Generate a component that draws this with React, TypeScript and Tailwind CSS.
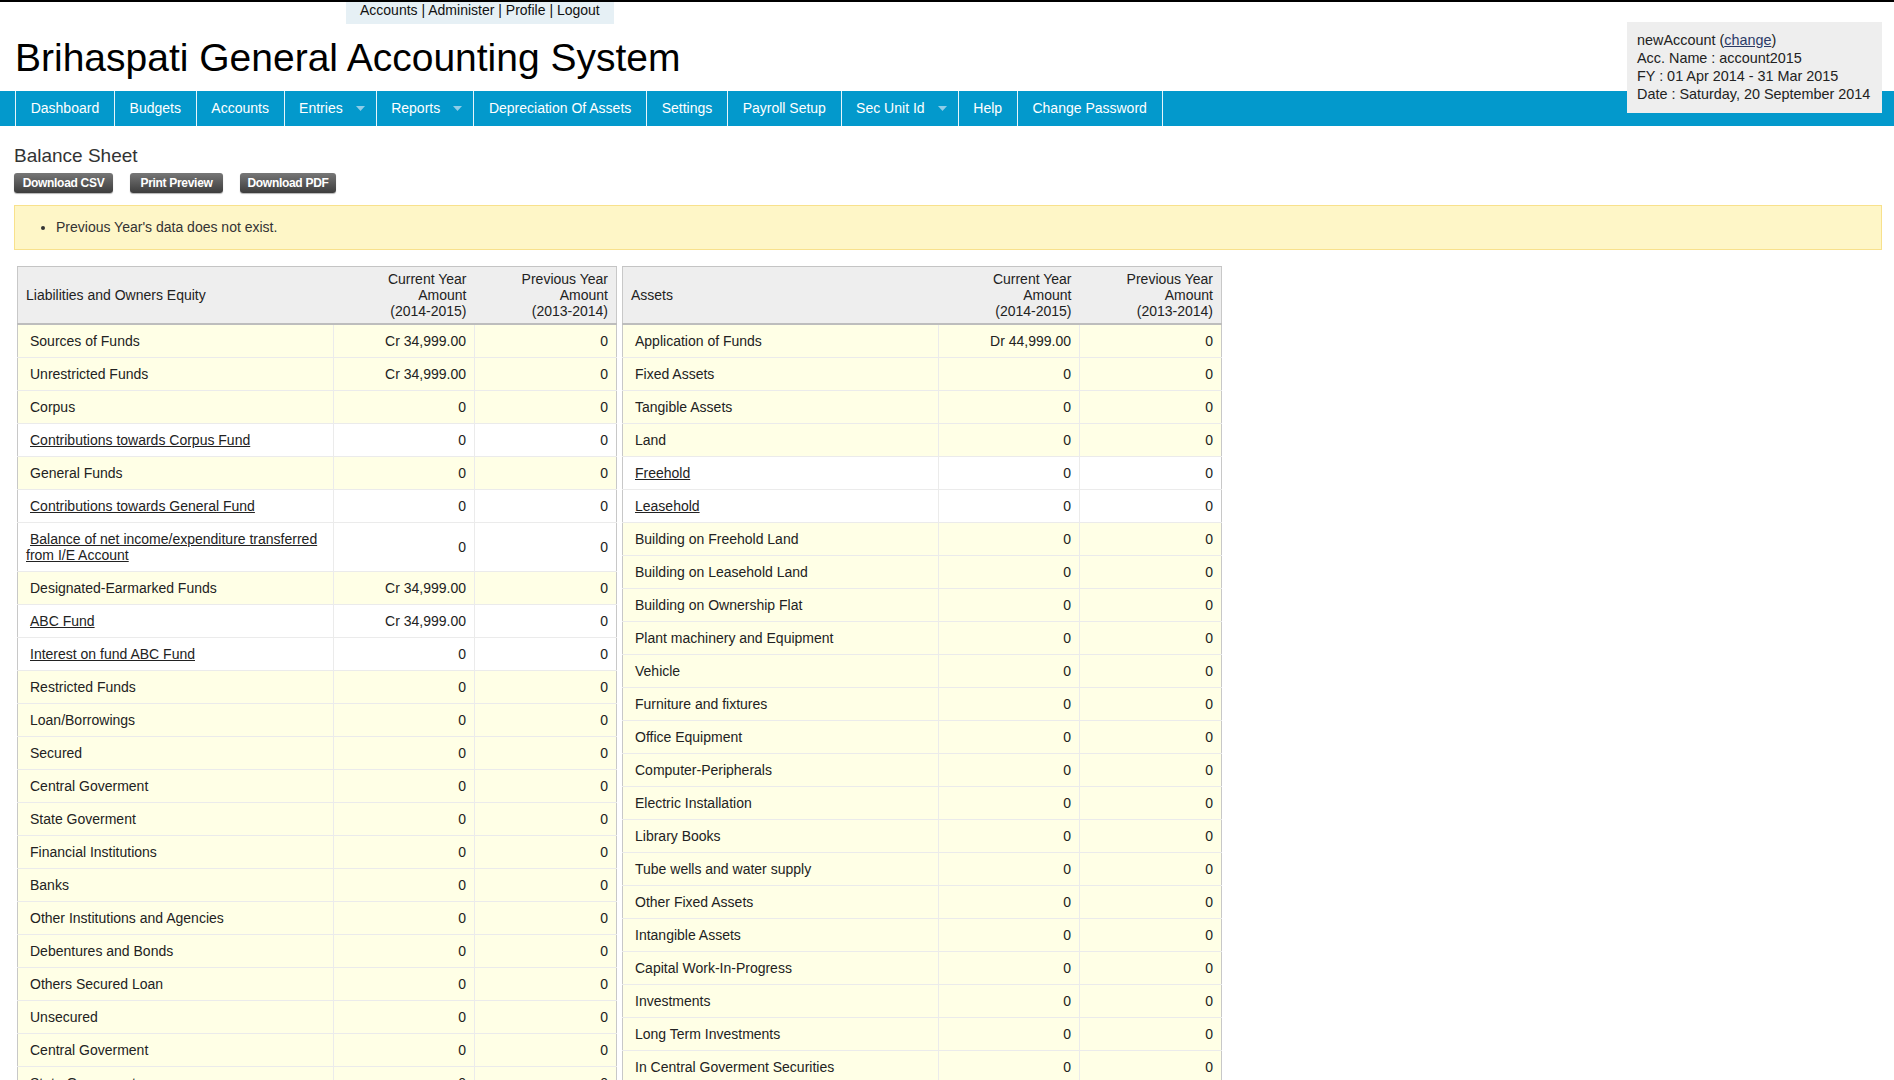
import React from "react";

type Row = { l: string; c: string; p: string; link?: boolean };

const leftRows: Row[] = [
  { l: "Sources of Funds", c: "Cr 34,999.00", p: "0" },
  { l: "Unrestricted Funds", c: "Cr 34,999.00", p: "0" },
  { l: "Corpus", c: "0", p: "0" },
  { l: "Contributions towards Corpus Fund", c: "0", p: "0", link: true },
  { l: "General Funds", c: "0", p: "0" },
  { l: "Contributions towards General Fund", c: "0", p: "0", link: true },
  { l: "Balance of net income/expenditure transferred from I/E Account", c: "0", p: "0", link: true },
  { l: "Designated-Earmarked Funds", c: "Cr 34,999.00", p: "0" },
  { l: "ABC Fund", c: "Cr 34,999.00", p: "0", link: true },
  { l: "Interest on fund ABC Fund", c: "0", p: "0", link: true },
  { l: "Restricted Funds", c: "0", p: "0" },
  { l: "Loan/Borrowings", c: "0", p: "0" },
  { l: "Secured", c: "0", p: "0" },
  { l: "Central Goverment", c: "0", p: "0" },
  { l: "State Goverment", c: "0", p: "0" },
  { l: "Financial Institutions", c: "0", p: "0" },
  { l: "Banks", c: "0", p: "0" },
  { l: "Other Institutions and Agencies", c: "0", p: "0" },
  { l: "Debentures and Bonds", c: "0", p: "0" },
  { l: "Others Secured Loan", c: "0", p: "0" },
  { l: "Unsecured", c: "0", p: "0" },
  { l: "Central Goverment", c: "0", p: "0" },
  { l: "State Goverment", c: "0", p: "0" },
  { l: "Financial Institutions", c: "0", p: "0" },
  { l: "Banks", c: "0", p: "0" },
];

const rightRows: Row[] = [
  { l: "Application of Funds", c: "Dr 44,999.00", p: "0" },
  { l: "Fixed Assets", c: "0", p: "0" },
  { l: "Tangible Assets", c: "0", p: "0" },
  { l: "Land", c: "0", p: "0" },
  { l: "Freehold", c: "0", p: "0", link: true },
  { l: "Leasehold", c: "0", p: "0", link: true },
  { l: "Building on Freehold Land", c: "0", p: "0" },
  { l: "Building on Leasehold Land", c: "0", p: "0" },
  { l: "Building on Ownership Flat", c: "0", p: "0" },
  { l: "Plant machinery and Equipment", c: "0", p: "0" },
  { l: "Vehicle", c: "0", p: "0" },
  { l: "Furniture and fixtures", c: "0", p: "0" },
  { l: "Office Equipment", c: "0", p: "0" },
  { l: "Computer-Peripherals", c: "0", p: "0" },
  { l: "Electric Installation", c: "0", p: "0" },
  { l: "Library Books", c: "0", p: "0" },
  { l: "Tube wells and water supply", c: "0", p: "0" },
  { l: "Other Fixed Assets", c: "0", p: "0" },
  { l: "Intangible Assets", c: "0", p: "0" },
  { l: "Capital Work-In-Progress", c: "0", p: "0" },
  { l: "Investments", c: "0", p: "0" },
  { l: "Long Term Investments", c: "0", p: "0" },
  { l: "In Central Goverment Securities", c: "0", p: "0" },
  { l: "In State Goverment Securities", c: "0", p: "0" },
];

const navItems: { t: string; dd?: boolean }[] = [
  { t: "Dashboard" },
  { t: "Budgets" },
  { t: "Accounts" },
  { t: "Entries", dd: true },
  { t: "Reports", dd: true },
  { t: "Depreciation Of Assets" },
  { t: "Settings" },
  { t: "Payroll Setup" },
  { t: "Sec Unit Id", dd: true },
  { t: "Help" },
  { t: "Change Password" },
];

const buttons: { t: string; w: string }[] = [
  { t: "Download CSV", w: "w-[99px]" },
  { t: "Print Preview", w: "w-[93px]" },
  { t: "Download PDF", w: "w-[96px]" },
];

function Sheet({ title, rows }: { title: string; rows: Row[] }) {
  return (
    <table className="w-[599px] table-fixed border-collapse border-x border-[#c8c8c8] text-[14px] text-[#222]">
      <colgroup>
        <col className="w-[316px]" />
        <col className="w-[141px]" />
        <col className="w-[142px]" />
      </colgroup>
      <thead>
        <tr className="bg-[#eeeeee] border-t border-t-[#c4c4c4] border-b-2 border-b-[#bdbdbd]">
          <th className="text-left font-normal pl-[8px] py-[4px] leading-[16px] align-middle">{title}</th>
          <th className="text-right font-normal pr-[8px] py-[4px] leading-[16px] align-middle">
            Current Year
            <br />
            Amount
            <br />
            (2014-2015)
          </th>
          <th className="text-right font-normal pr-[8px] py-[4px] leading-[16px] align-middle">
            Previous Year
            <br />
            Amount
            <br />
            (2013-2014)
          </th>
        </tr>
      </thead>
      <tbody>
        {rows.map((r, i) => (
          <tr key={i} className={`border-b border-b-[#ebebeb] ${r.link ? "bg-white" : "bg-[#ffffe6]"}`}>
            <td className="pl-[8px] pr-[6px] py-[8px] leading-[16px] indent-[4px] border-r border-r-[#ebebeb] align-middle">
              {r.link ? <a className="underline text-[#222] cursor-pointer">{r.l}</a> : r.l}
            </td>
            <td className="text-right pr-[8px] py-[8px] leading-[16px] border-r border-r-[#ebebeb] align-middle">{r.c}</td>
            <td className="text-right pr-[8px] py-[8px] leading-[16px] align-middle">{r.p}</td>
          </tr>
        ))}
      </tbody>
    </table>
  );
}

export default function App() {
  return (
    <div className="min-h-screen bg-white font-['Liberation_Sans',Arial,sans-serif] text-[#222]">
      <div className="relative border-t-2 border-black">
        {/* top links */}
        <div className="ml-[346px] w-fit h-[22px] bg-[#e6f0f5] px-[14px] text-[14px] leading-[16px] text-[#111]">
          <a className="cursor-pointer">Accounts</a> | <a className="cursor-pointer">Administer</a> |{" "}
          <a className="cursor-pointer">Profile</a> | <a className="cursor-pointer">Logout</a>
        </div>
        {/* title */}
        <div className="h-[67px] pl-[15px] pt-[11px]">
          <h1 className="text-[39px] leading-[45px] font-normal text-black">Brihaspati General Accounting System</h1>
        </div>
        {/* nav */}
        <nav className="h-[35px] bg-[#0399cc] pl-[15px] flex">
          <ul className="flex border-l border-white/90 h-full">
            {navItems.map((n) => (
              <li
                key={n.t}
                className={`flex items-center h-full border-r border-white/90 text-white text-[14px] ${
                  n.dd ? "pl-[14.5px] pr-[11px]" : "px-[14.7px]"
                }`}
              >
                <span>{n.t}</span>
                {n.dd && (
                  <svg width="9" height="5" viewBox="0 0 9 5" className="ml-[13px]">
                    <path d="M0 0h9L4.5 5z" fill="#8fcde8" />
                  </svg>
                )}
              </li>
            ))}
          </ul>
        </nav>
        {/* account info box */}
        <div className="absolute right-[12px] top-[20px] w-[255px] h-[91px] bg-[#eeeeee] pl-[10px] pt-[9px] text-[14.4px] leading-[18px] text-[#222]">
          <div>
            newAccount (<a className="underline text-[#2b3a67] cursor-pointer">change</a>)
          </div>
          <div>Acc. Name : account2015</div>
          <div>FY : 01 Apr 2014 - 31 Mar 2015</div>
          <div>Date : Saturday, 20 September 2014</div>
        </div>
      </div>

      <div className="pl-[14px] pr-[12px]">
        <h2 className="mt-[19px] text-[19px] leading-[22px] font-normal text-[#333]">Balance Sheet</h2>
        <div className="mt-[6px] flex gap-[17px]">
          {buttons.map((b) => (
            <button
              key={b.t}
              className={`${b.w} h-[20px] rounded-[3px] bg-gradient-to-b from-[#777777] to-[#3d3d3d] text-center text-[12px] font-bold tracking-[-0.3px] text-white shadow-[0_1px_1px_rgba(0,0,0,0.3)] leading-[20px]`}
            >
              {b.t}
            </button>
          ))}
        </div>
        <div className="mt-[12px] h-[45px] border border-[#f8e18c] bg-[#fef6c7] flex items-center">
          <ul className="list-disc pl-[41px] text-[14px] text-[#333]">
            <li>Previous Year's data does not exist.</li>
          </ul>
        </div>
        <div className="mt-[16px] ml-[3px] flex items-start gap-[5px] pb-[20px]">
          <Sheet title="Liabilities and Owners Equity" rows={leftRows} />
          <Sheet title="Assets" rows={rightRows} />
        </div>
      </div>
    </div>
  );
}
